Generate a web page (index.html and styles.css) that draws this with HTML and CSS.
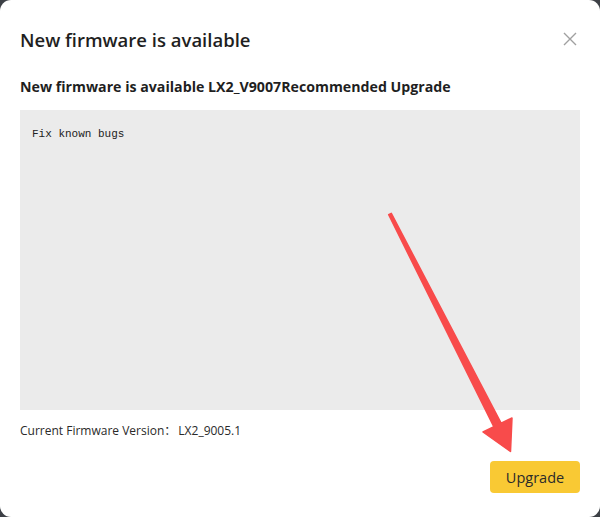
FILE: index.html
```html
<!DOCTYPE html>
<html lang="en">
<head>
<meta charset="utf-8">
<title>New firmware is available</title>
<link rel="stylesheet" href="styles.css">
</head>
<body>
<div class="dialog">
  <div class="header">
    <h1 class="title">New firmware is available</h1>
    <button class="close" aria-label="Close">
      <svg width="14" height="14" viewBox="0 0 14 14"><path d="M1 1L13 13M13 1L1 13" stroke="#a0a0a0" stroke-width="1.4" fill="none"/></svg>
    </button>
  </div>
  <div class="subtitle">New firmware is available LX2_V9007Recommended Upgrade</div>
  <pre class="notes">Fix known bugs</pre>
  <div class="current">Current Firmware Version<span class="colon" lang="zh-CN">：</span>LX2_9005.1</div>
  <div class="footer">
    <button class="upgrade">Upgrade</button>
  </div>
  <svg class="arrow" width="600" height="517" viewBox="0 0 600 517">
    <polygon fill="#f84b4b" stroke="#f84b4b" stroke-width="1.5" stroke-linejoin="round"
      points="388.7,214.7 391.3,213.3 501.1,423.2 512,418 510.5,451.5 483,432 493.9,426.8"/>
  </svg>
</div>
</body>
</html>
```
FILE: styles.css
```css
html, body {
  margin: 0;
  padding: 0;
}
body {
  background: #3d4046;
  width: 600px;
  height: 517px;
  overflow: hidden;
  font-family: "Open Sans", "Noto Sans", sans-serif;
  color: #1f1f1f;
}
.dialog {
  position: relative;
  box-sizing: border-box;
  width: 600px;
  height: 517px;
  background: #fff;
  border-radius: 11px;
  padding: 0 20px 24px 20px;
  display: flex;
  flex-direction: column;
}
.header {
  display: flex;
  align-items: center;
  justify-content: space-between;
  height: 78px;
}
.title {
  margin: 0;
  font-size: 18.5px;
  font-weight: 600;
  color: #1f1f1f;
}
.close {
  border: 0;
  background: none;
  padding: 0;
  margin-right: 3px;
  display: flex;
  cursor: pointer;
}
.subtitle {
  font-size: 14.2px;
  font-weight: 700;
  line-height: 20px;
  margin-bottom: 13px;
  margin-top: -1px;
}
.notes {
  margin: 0;
  height: 300px;
  box-sizing: border-box;
  background: #ebebeb;
  padding: 17px 12px 0;
  font-family: "Liberation Mono", "DejaVu Sans Mono", monospace;
  font-size: 11px;
  line-height: 14px;
  color: #222;
}
.current {
  margin-top: 11px;
  font-size: 12px;
  line-height: 18px;
  color: #2a2a2a;
}
.colon {
  font-family: "Noto Sans CJK SC", sans-serif;
  margin-right: 2px;
}
.footer {
  margin-top: auto;
  display: flex;
  justify-content: flex-end;
}
.upgrade {
  width: 90px;
  height: 32px;
  border: 0;
  border-radius: 4px;
  background: #f9c934;
  color: #2b2b2b;
  font-family: "Open Sans", "Noto Sans", sans-serif;
  font-size: 14.5px;
  cursor: pointer;
}
.arrow {
  position: absolute;
  left: 0;
  top: 0;
  pointer-events: none;
}
```
